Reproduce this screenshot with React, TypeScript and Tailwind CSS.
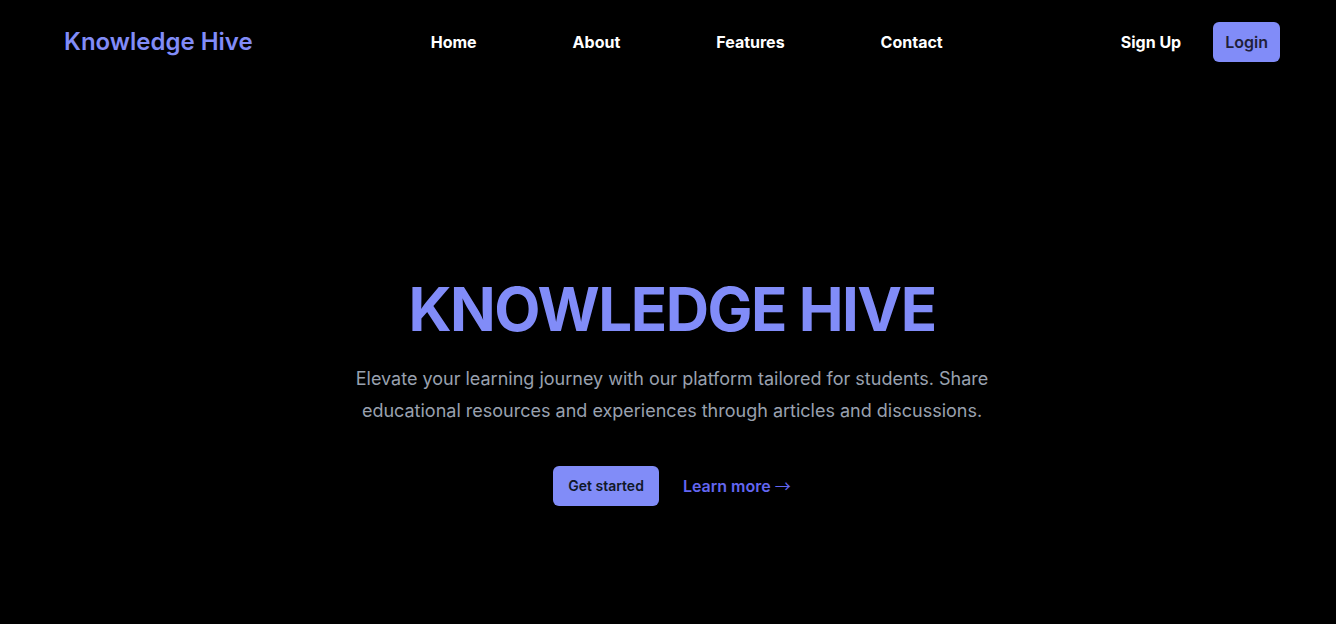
import React from "react";

export default function App() {
  return (
    <div className="min-h-[624px] bg-black text-white pl-2" style={{ fontFamily: "Inter, 'Noto Sans', sans-serif" }}>
      <header className="flex items-center justify-between px-14 h-[84px]">
        <a className="text-2xl font-semibold text-[#818cf8]">Knowledge Hive</a>
        <nav className="flex items-center gap-x-[96px] text-base font-bold">
          <a>Home</a>
          <a>About</a>
          <a>Features</a>
          <a>Contact</a>
        </nav>
        <div className="flex items-center gap-x-8 font-bold text-base">
          <a>Sign Up</a>
          <a className="rounded-md bg-[#818cf8] px-3 h-10 flex items-center text-[#1f1f3a] font-semibold">Login</a>
        </div>
      </header>
      <main className="flex flex-col items-center text-center pt-[195px]">
        <h1 className="text-6xl leading-none font-bold tracking-tight text-[#818cf8]">KNOWLEDGE HIVE</h1>
        <p className="mt-6 max-w-2xl text-lg leading-8 text-gray-400">
          Elevate your learning journey with our platform tailored for students. Share educational resources and experiences through articles and discussions.
        </p>
        <div className="mt-[39px] flex items-center gap-x-6">
          <a className="rounded-md bg-[#818cf8] px-[15px] h-10 flex items-center text-sm font-semibold text-gray-900">Get started</a>
          <a className="text-base leading-6 font-semibold text-[#6366f1]">
            Learn more{" "}
            <span className="font-normal leading-none" style={{ fontFamily: "'Noto Sans CJK SC', sans-serif" }}>→</span>
          </a>
        </div>
      </main>
    </div>
  );
}
